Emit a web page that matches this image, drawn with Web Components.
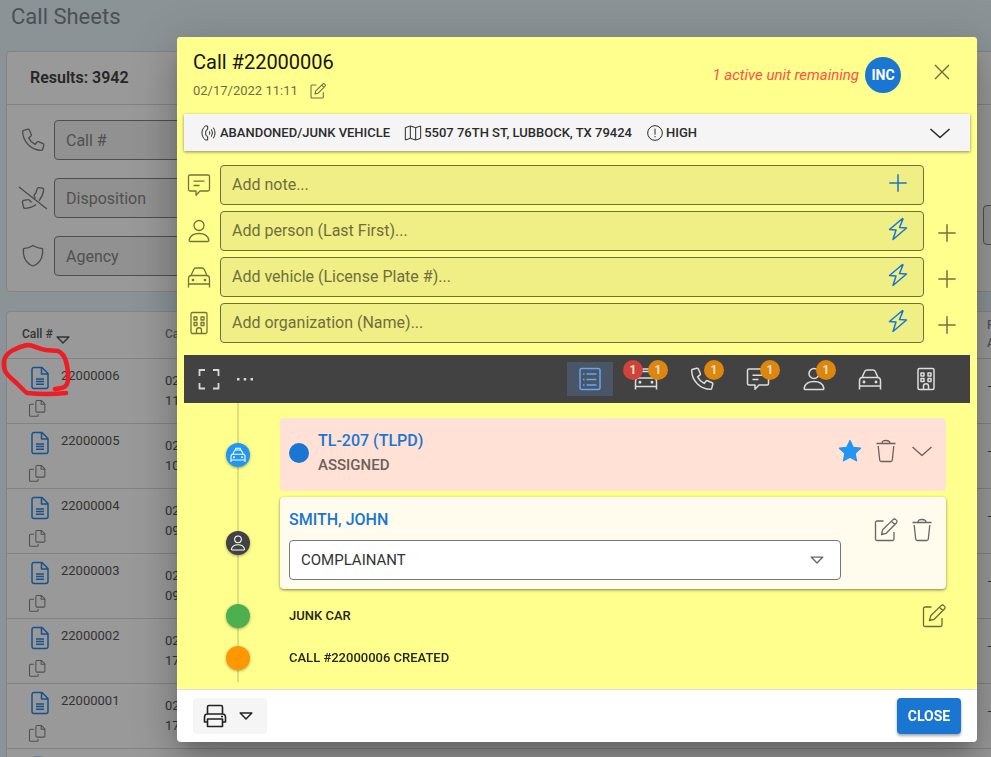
<!DOCTYPE html>
<html lang="en">
<head>
<meta charset="utf-8">
<title>Call Sheets</title>
<style>
html, body { height: 100%; }
body { margin: 0; overflow: hidden; font: 16px/20px Roboto, sans-serif; background: #8b9397; color: #262626; }
</style>
</head>
<body>
<call-sheets-page></call-sheets-page>
<red-scribble></red-scribble>
<call-dialog></call-dialog>
<script>
const base = `*{box-sizing:border-box}button{font:inherit;color:inherit;background:none;border:0;padding:0;margin:0;cursor:pointer;display:flex;align-items:center;justify-content:center}`;

function define(name, render) {
  customElements.define(name, class extends HTMLElement {
    connectedCallback() {
      if (this.shadowRoot) return;
      const t = document.createElement('template');
      t.innerHTML = '<style>' + base + '</style>' + render(this);
      this.attachShadow({ mode: 'open' }).append(t.content.cloneNode(true));
    }
  });
}

const icons = {
  phone: '<path d="M2.6 2.3 7 1.2c.6-.1 1 .1 1.300.7l2 4.600c.2.5.1 1-.3 1.400L7.600 9.900c1.400 2.900 3.600 5.100 6.500 6.500l2-2.400c.4-.4.9-.5 1.400-.3l4.600 2c.6.3.8.7.7 1.300l-1.100 4.400c-.1.600-.6.900-1.200.9C10.300 22.300 1.700 13.700 1.700 3.500c0-.6.3-1.100.9-1.200z"/>',
  hangup: '<path d="M14.500 12.500 13.300 10.500C12.700 9.300 13.500 8 15 6.700L16 3.200C16.300 2.200 17 1.600 18 1.700L21.300 2.200C22.400 2.400 22.800 3 22.600 4 22.300 8 21 11 18 14.800M10.500 16.500 8.500 14.200C8 13.600 7.500 13.400 6.800 13.600L2.800 14.400C1.800 14.600 1.300 15.400 1.500 16.300L2.500 21C2.700 22 3.400 22.500 4.400 22.400 9 22 12 21 15 18.500M-2 1 26 23"/>',
  shield: '<path d="M12 1.500c3 2 6 2.900 9.500 3.200.6 7-1.500 14.300-9.500 17.300C4 19 1.900 11.700 2.500 4.700 6 4.400 9 3.500 12 1.500z"/>',
  doc: '<path d="M4 3.500A2 2 0 0 1 6 1.500h8l6 6V21a2 2 0 0 1-2 1.500H6A2 2 0 0 1 4 21zM13.500 1.800V8h6M8 13h8M8 15.600h8M8 18.200h8"/>',
  copy: '<path d="M10.500 3.500a1.500 1.500 0 0 1 1.500-1.500h6l4.500 4.500V16a1.500 1.500 0 0 1-1.500 1.500h-9a1.500 1.500 0 0 1-1.500-1.500zM17.500 2v5h5M8 7H3.500A1.500 1.500 0 0 0 2 8.500v13A1.500 1.500 0 0 0 3.500 23h8.500a1.500 1.500 0 0 0 1.500-1.500V20"/>',
  down: '<path d="M5 8.500h14l-7 7z"/>',
  edit: '<path d="M9.500 3H3A1.500 1.500 0 0 0 1.500 4.500v16.500A1.500 1.500 0 0 0 3 22.500h15.500A1.500 1.500 0 0 0 20 21v-7M7.500 16.500l1.200-4.700L19 1.600a2 2 0 0 1 2.900 0l.5.5a2 2 0 0 1 0 2.900L12.200 15.300zM17.500 3.200l3.300 3.300"/>',
  callout: '<path d="M6.500 1.500h3.500v5.500L7.500 8q-1.200 4 0 8l2.500 1v5.500H6.500C0 17-.5 7 6.500 1.500zM12.500 9.500q1.500 2.500 0 5M15.500 6.500q3.500 5.500 0 11M18.500 4q5 8 0 16"/>',
  map: '<path d="M.5 4 8 1.500 16 4l7.500-2.500V20L16 22.500 8 20 .5 22.500zM8 1.500V20M16 4v18.500"/>',
  alert: '<circle cx="12" cy="12" r="11"/><path d="M12 5.500v9M12 16.500v2"/>',
  chevron: '<path d="M2.500 8l9.500 8.500L21.500 8"/>',
  close: '<path d="M5 5l14 14M19 5L5 19"/>',
  plus: '<path d="M12 3.300v17.400M3.300 12h17.400"/>',
  note: '<path d="M3 2h18a1.500 1.500 0 0 1 1.500 1.500v13a1.500 1.500 0 0 1-1.500 1.500H13l-4 4.300V18H3a1.500 1.500 0 0 1-1.500-1.500v-13A1.500 1.500 0 0 1 3 2zM6.500 8.200h11M6.500 12.500h6"/>',
  person: '<circle cx="12" cy="6.500" r="5"/><path d="M3.500 22.500C2.500 22.500 2 22 2.200 21 3.200 16.500 7 14.500 12 14.500s8.800 2 9.800 6.500c.2 1-.3 1.500-1.300 1.500z"/>',
  car: '<path d="M4 10.500 6.700 4.500C7.200 3.400 8 3 9 3h6c1 0 1.800.4 2.300 1.500L20 10.500M1.500 22.500V14c0-2 1-3.500 3-3.500h15c2 0 3 1.500 3 3.500v8.500M1.500 19h21"/><circle cx="6" cy="15" r=".7"/><circle cx="18" cy="15" r=".7"/>',
  police: '<path d="M4 11 6.500 6C7 4.900 7.700 4.500 8.500 4.500h7c.8 0 1.500.4 2 1.500L20 11M8.500 4V2h7v2M1.500 22.500V14.500c0-2 1-3.500 3-3.500h15c2 0 3 1.500 3 3.500v8M1.500 19.500h21"/><circle cx="6" cy="15.300" r=".7"/><circle cx="18" cy="15.300" r=".7"/>',
  building: '<rect x="4" y="1.500" width="16" height="21" rx="1.500"/><path d="M7 6h3v3H7zM14 6h3v3h-3zM7 11.500h3v3H7zM14 11.500h3v3h-3zM9.500 22.500V19c0-3 5-3 5 0v3.500"/>',
  bolt: '<path d="M16.500 1.500 3.500 12.500l6.500.5L7 22.500 20.500 11l-7-.5L17 2z"/>',
  expand: '<path d="M2.500 9V3H8M16 3h5.500v6M21.500 16v5.500H16M8 21.500H2.500V16"/>',
  dots: '<g fill="currentColor" stroke="none"><rect x="4" y="11" width="2.500" height="2.500"/><rect x="10.700" y="11" width="2.500" height="2.500"/><rect x="17.500" y="11" width="2.500" height="2.500"/></g>',
  list: '<rect x="2" y="1.500" width="20" height="21" rx="2"/><path d="M8.500 7h10M8.500 12.500h10M8.500 18h10M5 7h1.500M5 12.500h1.500M5 18h1.500"/>',
  star: '<path fill="currentColor" d="M12 1.500l3.200 6.800 7.300.9-5.400 5.100 1.400 7.500L12 18.200l-6.500 3.600 1.400-7.500L1.500 9.200l7.300-.9z"/>',
  trash: '<path d="M2.500 4.500h19M8 4.500C8 2 9.500 1.500 12 1.500s4 .5 4 3M4.200 7l1.500 14c.1 1 .6 1.500 1.500 1.500h9.600c.9 0 1.400-.5 1.500-1.500l1.500-14"/>',
  print: '<path d="M4.500 10V3c0-1 .5-1.500 1.500-1.500h12c1 0 1.500.5 1.500 1.500v7M4.500 18H1.500v-4.500c0-2 1-3.500 3-3.500h15c2 0 3 1.500 3 3.500V18h-3M4.500 15h15v7.500h-15zM18 12.500h2"/>'
};
define('app-icon', el => `<style>:host{display:block;flex:none;width:var(--icon-size,24px);height:var(--icon-size,24px)}svg{display:block;width:100%;height:100%;overflow:visible}</style>
<svg viewBox="0 0 24 24" fill="none" stroke="currentColor" stroke-width="${el.getAttribute('weight') || 1.300}" stroke-linejoin="round" aria-hidden="true">${icons[el.getAttribute('name')]}</svg>`);

define('filter-field', el => `<style>
:host{display:grid;grid-template-columns:24px 1fr;gap:9px;align-items:center;color:#4b4b4b}
input{font:16px/20px Roboto,sans-serif;height:40px;width:100%;padding:0 11px;border:1px solid #4f4f4f;border-radius:4px;background:#919191;color:inherit}
input::placeholder{color:#505050;opacity:1}
</style>${el.hasAttribute('icon') ? `<app-icon name="${el.getAttribute('icon')}"></app-icon>` : '<span></span>'}
<input aria-label="${el.getAttribute('label') || 'Filter'}" placeholder="${el.getAttribute('label') || ''}">`);

define('filter-card', () => `<style>
:host{display:block;background:#999;border:1px solid #848484;border-radius:4px;margin-bottom:19px}
h2{margin:0;padding:16px 23px;font-size:16px;line-height:20px;font-weight:600;border-bottom:1px solid #828282}
form{display:grid;grid-template-columns:1fr 206px;gap:18px 24px;padding:15px 14px}
.col{display:grid;gap:18px;align-content:center}
.col + .col{padding-top:54px}
</style><h2>Results: 3942</h2>
<form><div class="col"><filter-field icon="phone" label="Call #"></filter-field><filter-field icon="hangup" label="Disposition"></filter-field><filter-field icon="shield" label="Agency"></filter-field></div>
<div class="col"><filter-field></filter-field></div></form>`);

const rows = [['22000006','11'],['22000005','10'],['22000004','09'],['22000003','09'],['22000002','17'],['22000001','17'],['22000000','16']];
define('call-table', () => `<style>
:host{display:block;background:#999;border:1px solid #848484;border-radius:4px}
table{width:100%;border-collapse:collapse;table-layout:fixed}
th{height:46px;padding:0 0 2px;text-align:left;font-size:12px;line-height:18px;font-weight:500;color:#555}
th:first-child{padding-left:15px;color:#333}
.sort{display:flex;align-items:center}.sort app-icon{--icon-size:20px;margin-top:10px;margin-bottom:-2px}
td{border-top:1px solid #828282;height:65px;padding:0;vertical-align:middle;font-size:13px;line-height:20px;color:#333}
td:first-child{vertical-align:top;padding:7px 0 0 21px}
td:last-child{padding-bottom:8px}
.line{display:flex;align-items:center;gap:9px;height:24px}
.line app-icon{color:#17518e}
.line span{line-height:20px;padding-bottom:4px}
.copy{padding-top:9px;color:#505050}.copy app-icon{--icon-size:18px}
col.a{width:158px}col.c{width:183px}
</style><table><colgroup><col class="a"><col><col class="c"></colgroup>
<thead><tr><th><span class="sort">Call # <app-icon name="down" weight="1.8"></app-icon></span></th><th>Ca</th><th>R<br>A</th></tr></thead>
<tbody>${rows.map(r => `<tr><td><div class="line"><app-icon name="doc" weight="1.5"></app-icon><span>${r[0]}</span></div><div class="copy"><app-icon name="copy" weight="1.4"></app-icon></div></td><td>02<br>${r[1]}</td><td>—</td></tr>`).join('')}</tbody></table>`);

define('call-sheets-page', () => `<style>
:host{display:block;height:100%;overflow:hidden}
.page{width:calc(100% + 180px);padding-left:6px}
h1{margin:0;padding:3px 6px 20px 5px;font-size:22px;line-height:28px;font-weight:400;color:#4d5052}
</style><div class="page"><h1>Call Sheets</h1><filter-card></filter-card><call-table></call-table></div>`);

define('red-scribble', () => `<style>:host{position:absolute;left:0;top:340px;width:76px;height:60px}svg{display:block;width:100%;height:100%}</style>
<svg viewBox="0 340 76 60" fill="none" stroke="#ee1d23" stroke-width="4.500" stroke-linecap="round" stroke-linejoin="round" aria-hidden="true"><path d="M66 393Q46 395 27 393C22 389 17 383 12 379 6 374 3 370 4 361 5 352 18 347 27 345 34 345 38 349 46 350L58 351C65 354 67 362 68 373 69 386 66 388 55 389"/></svg>`);

define('dialog-header', () => `<style>
:host{display:flex;align-items:center;gap:6px;padding:12px 23px 13px 16px}
.t{flex:1}h1{margin:0;font-size:20px;line-height:26px;font-weight:400;color:#16160f}
.d{display:flex;align-items:center;gap:12px;font-size:13px;line-height:20px;color:#6f6f42;padding-top:6px}
.d app-icon{--icon-size:16px}
em{color:#ff5147;font-size:15px}
.inc{width:36px;height:36px;border-radius:50%;background:#1976d2;color:#fff;font-size:14px;font-weight:700}
.x{margin:0 0 6px 23px;color:#6b6b3a}
</style><div class="t"><h1>Call #22000006</h1><div class="d">02/17/2022 11:11 <button aria-label="Edit date"><app-icon name="edit" weight="1.600"></app-icon></button></div></div>
<em>1 active unit remaining</em><button class="inc">INC</button><button class="x" aria-label="Close dialog"><app-icon name="close" weight="1.400"></app-icon></button>`);

define('call-summary', () => `<style>
:host{display:flex;align-items:center;gap:15px;height:37px;margin:0 7px;padding:0 18px 0 17px;background:#f5f5f5;box-shadow:0 1px 3px rgba(0,0,0,.45);font-size:13px;font-weight:500;color:#2b2b2b}
span{display:flex;align-items:center;gap:3px;white-space:nowrap}
app-icon{--icon-size:16px}button{margin-left:auto}button app-icon{--icon-size:24px}
</style><span><app-icon name="callout" weight="1.500"></app-icon>ABANDONED/JUNK VEHICLE</span><span><app-icon name="map" weight="1.5"></app-icon>5507 76TH ST, LUBBOCK, TX 79424</span><span><app-icon name="alert" weight="1.5"></app-icon>HIGH</span><button aria-label="Expand"><app-icon name="chevron" weight="1.6"></app-icon></button>`);

define('quick-add', el => `<style>
:host{display:grid;grid-template-columns:24px 1fr 28px;gap:9px;align-items:center;color:#73733f}
.f{display:flex;align-items:center;height:40px;padding:0 13px 0 11px;border:1px solid #70703f;border-radius:4px;background:#f0ef85}
input{font:16px/20px Roboto,sans-serif;flex:1;min-width:0;border:0;outline:0;padding:0;background:none;color:#333}
input::placeholder{color:#6e6e3e;opacity:1}
.f button{color:#1976d2;padding-bottom:4px}
.p{padding-top:4px}
</style><app-icon name="${el.getAttribute('icon')}"></app-icon><div class="f"><input aria-label="${el.getAttribute('label')}" placeholder="${el.getAttribute('label')}"><button aria-label="Quick add"><app-icon name="${el.getAttribute('action')}" weight="1.5"></app-icon></button></div>
${el.hasAttribute('more') ? '<button class="p" aria-label="Add details"><app-icon name="plus" weight="1.5"></app-icon></button>' : ''}`);

define('tool-button', el => {
  const left = el.getAttribute('alert'), right = el.getAttribute('count');
  return `<style>
:host{display:block}
button{position:relative;width:46px;height:34px;color:#ddd}
:host([active]) button{background:#4a5665;color:#64a5f5}
b{position:absolute;top:-2px;width:20px;height:20px;border-radius:50%;font-size:12px;line-height:20px;font-weight:700;text-align:center;color:#e8e0d4}
.l{left:0;background:#d0433a}.r{right:1px;background:#dc860c}
</style><button aria-label="${el.getAttribute('label')}"><app-icon name="${el.getAttribute('icon')}" weight="1.500"></app-icon>${left ? `<b class="l">${left}</b>` : ''}${right ? `<b class="r">${right}</b>` : ''}</button>`;
});
define('call-toolbar', () => `<style>
:host{display:flex;align-items:center;gap:10px;height:48px;margin:12px 7px 0;padding:0 21px 0 13px;background:#424242;color:#d8d8d8}
.s{flex:1;display:flex;gap:12px}
</style><div class="s"><button aria-label="Full screen"><app-icon name="expand" weight="1.800"></app-icon></button><button aria-label="More"><app-icon name="dots"></app-icon></button></div>
<tool-button icon="list" label="All" active></tool-button><tool-button icon="police" label="Units" alert="1" count="1"></tool-button><tool-button icon="phone" label="Calls" count="1"></tool-button><tool-button icon="note" label="Notes" count="1"></tool-button><tool-button icon="person" label="People" count="1"></tool-button><tool-button icon="car" label="Vehicles"></tool-button><tool-button icon="building" label="Organizations"></tool-button>`);

define('timeline-item', el => `<style>
:host{display:grid;grid-template-columns:24px 1fr;gap:30px;align-items:center;position:relative}
.dot{width:24px;height:24px;border-radius:50%;background:${el.getAttribute('color')};color:#fff;display:flex;align-items:center;justify-content:center;box-shadow:0 1px 3px rgba(0,0,0,.35);--icon-size:16px}
</style><div class="dot">${el.hasAttribute('icon') ? `<app-icon name="${el.getAttribute('icon')}" weight="1.600"></app-icon>` : ''}</div><slot></slot>`);

define('unit-card', () => `<style>
:host{display:flex;align-items:center;gap:9px;padding:11px 12px 14px 9px;background:#ffe2d5;border-radius:4px;font-size:15px;line-height:24px;font-weight:500;color:#6b605b}
.c{width:20px;height:20px;border-radius:50%;background:#1976d2}
.t{flex:1}a{color:#1976d2;text-decoration:none;font-size:16px}
.act{display:flex;gap:12px;padding-bottom:4px}.star{color:#2196f3}
</style><div class="c"></div><div class="t"><a href="#unit">TL-207 (TLPD)</a><div>ASSIGNED</div></div>
<div class="act"><button class="star" aria-label="Primary unit"><app-icon name="star"></app-icon></button><button aria-label="Delete"><app-icon name="trash"></app-icon></button><button aria-label="Expand"><app-icon name="chevron"></app-icon></button></div>`);

define('person-card', () => `<style>
:host{display:flex;gap:33px;padding:13px 12px 9px 9px;background:#fffced;border-radius:4px;box-shadow:0 1px 3px rgba(0,0,0,.5);color:#666}
.m{flex:1}a{display:block;margin-bottom:10px;font-size:16px;line-height:20px;font-weight:500;color:#1976d2;text-decoration:none}
.s{display:grid;align-items:center}
select{grid-area:1/1;appearance:none;width:100%;height:40px;padding:0 11px;border:1px solid #777;border-radius:4px;background:#fff;color:#333;font:15px/20px Roboto,sans-serif}
.s app-icon{grid-area:1/1;justify-self:end;margin-right:14px;--icon-size:20px;pointer-events:none}
.act{display:flex;gap:12px;align-self:flex-start;padding-top:8px}
</style><div class="m"><a href="#person">SMITH, JOHN</a><div class="s"><select aria-label="Role"><option>COMPLAINANT</option></select><app-icon name="down" weight="1.6"></app-icon></div></div>
<div class="act"><button aria-label="Edit"><app-icon name="edit"></app-icon></button><button aria-label="Delete"><app-icon name="trash"></app-icon></button></div>`);

define('event-line', el => `<style>
:host{display:flex;align-items:center;justify-content:space-between;min-height:${el.hasAttribute('editable') ? 42 : 30}px;padding-left:9px;font-size:13px;font-weight:500;color:#26261c}
button{color:#6b6b3a}
</style><slot></slot>${el.hasAttribute('editable') ? '<button aria-label="Edit"><app-icon name="edit"></app-icon></button>' : ''}`);

define('call-timeline', () => `<style>
:host{display:block;padding-bottom:7px}
.w{position:relative;display:grid;gap:6px;padding:15px 31px 9px 49px}
.w::before{content:"";position:absolute;left:60px;top:0;bottom:0;width:2px;background:#e0df7b}
</style><div class="w">
<timeline-item color="#2196f3" icon="police"><unit-card></unit-card></timeline-item>
<timeline-item color="#424242" icon="person"><person-card></person-card></timeline-item>
<timeline-item color="#4caf50"><event-line editable>JUNK CAR</event-line></timeline-item>
<timeline-item color="#ff9800"><event-line>CALL #22000006 CREATED</event-line></timeline-item></div>`);

define('dialog-footer', () => `<style>
:host{display:flex;justify-content:space-between;padding:8px 16px;border-top:1px solid #ddd}
.p{gap:9px;height:36px;padding:0 11px 0 10px;border-radius:4px;background:#f5f5f5;color:#222}
.p app-icon + app-icon{--icon-size:20px}
.c{height:36px;min-width:64px;padding:0 9px;border-radius:4px;background:#1976d2;color:#fff;font-size:14px;font-weight:700;box-shadow:0 2px 3px rgba(0,0,0,.35)}
</style><button class="p" aria-label="Print"><app-icon name="print" weight="1.600"></app-icon><app-icon name="down" weight="1.8"></app-icon></button><button class="c">CLOSE</button>`);

define('call-dialog', () => `<style>
:host{position:fixed;inset:0;padding:37px 14px 0 177px;box-sizing:border-box}
section{background:#fff;border-radius:4px;box-shadow:0 11px 15px -7px rgba(0,0,0,.2),0 24px 38px 3px rgba(0,0,0,.14),0 9px 46px 8px rgba(0,0,0,.12)}
.y{background:#ffff8d;border-radius:4px}
.fields{display:grid;gap:6px;padding:14px 16px 0 10px}
</style><section role="dialog" aria-label="Call #22000006"><div class="y"><dialog-header></dialog-header><call-summary></call-summary>
<div class="fields"><quick-add icon="note" label="Add note..." action="plus"></quick-add><quick-add icon="person" label="Add person (Last First)..." action="bolt" more></quick-add><quick-add icon="car" label="Add vehicle (License Plate #)..." action="bolt" more></quick-add><quick-add icon="building" label="Add organization (Name)..." action="bolt" more></quick-add></div>
<call-toolbar></call-toolbar><call-timeline></call-timeline></div><dialog-footer></dialog-footer></section>`);
</script>
</body>
</html>
